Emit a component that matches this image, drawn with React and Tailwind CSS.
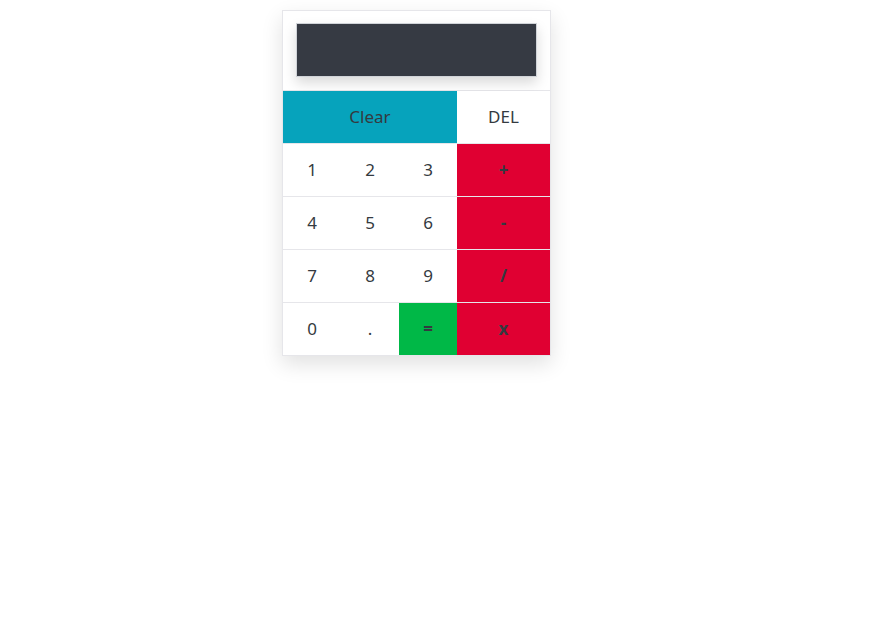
export default function App() {
  const cell = "flex items-center justify-center h-[52px] text-[17px] text-[#343a40] bg-white";
  const op = "flex items-center justify-center h-[52px] text-[17px] font-bold text-[#343a40] bg-[#e00032]";
  return (
    <div className="min-h-screen bg-white" style={{ fontFamily: '"Noto Sans", "Open Sans", sans-serif' }}>
      <div className="pt-[10px] pl-[282px]">
        <div className="w-[269px] border border-[#e6e6ea] shadow-[0_8px_20px_rgba(0,0,0,0.12)] bg-white">
          <div className="pl-[13px] pr-[13px] pt-[12px] pb-[13px] border-b border-[#e6e6ea]">
            <div className="h-[54px] bg-[#363a43] border border-[#d0d3d8] shadow-[0_6px_12px_rgba(0,0,0,0.15)]"></div>
          </div>
          <div className="grid grid-cols-[58px_58px_58px_93px] gap-y-px bg-[#e6e6ea]">
            <div className="col-span-3 flex items-center justify-center h-[52px] text-[17px] text-[#343a40] bg-[#06a3bc]">Clear</div>
            <div className={cell}>DEL</div>
            <div className={cell}>1</div>
            <div className={cell}>2</div>
            <div className={cell}>3</div>
            <div className={op}>+</div>
            <div className={cell}>4</div>
            <div className={cell}>5</div>
            <div className={cell}>6</div>
            <div className={op}>-</div>
            <div className={cell}>7</div>
            <div className={cell}>8</div>
            <div className={cell}>9</div>
            <div className={op}>/</div>
            <div className={cell}>0</div>
            <div className={cell}>.</div>
            <div className="flex items-center justify-center h-[52px] text-[17px] font-bold text-[#343a40] bg-[#00b847]">=</div>
            <div className={op}>x</div>
          </div>
        </div>
      </div>
    </div>
  );
}
